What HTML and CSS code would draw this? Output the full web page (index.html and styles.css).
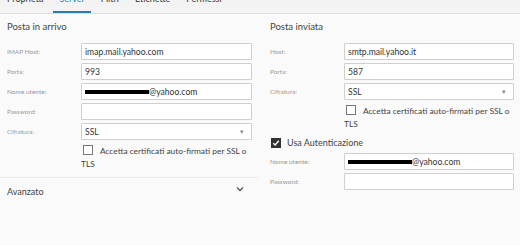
FILE: index.html
```html
<!DOCTYPE html>
<html lang="it">
  <head>
    <meta charset="UTF-8" />
    <title>Impostazioni account</title>
    <link rel="stylesheet" href="styles.css">
  </head>
  <body>
    <nav class="tabs">
      <span class="tab">Proprietà</span>
      <span class="tab active">Server</span>
      <span class="tab">Filtri</span>
      <span class="tab">Etichette</span>
      <span class="tab">Permessi</span>
    </nav>

    <div class="columns">
      <section class="col">
        <h2 class="title">Posta in arrivo</h2>
        <div class="field">
          <label>IMAP Host:</label>
          <div class="input">imap.mail.yahoo.com</div>
        </div>
        <div class="field">
          <label>Porta:</label>
          <div class="input">993</div>
        </div>
        <div class="field">
          <label>Nome utente:</label>
          <div class="input"><span class="redacted"></span>@yahoo.com</div>
        </div>
        <div class="field">
          <label>Password:</label>
          <div class="input"></div>
        </div>
        <div class="field">
          <label>Cifratura:</label>
          <div class="input select">SSL<span class="caret">&#9662;</span></div>
        </div>
        <div class="check-row">
          <div class="check">
            <span class="box"></span>
            <span>Accetta certificati auto-firmati per SSL o TLS</span>
          </div>
        </div>
        <div class="accordion">
          <span>Avanzato</span>
          <svg class="chevron" width="8" height="6" viewBox="0 0 8 6">
            <path d="M1 1.5 L4 4.5 L7 1.5" fill="none" stroke="#555" stroke-width="1.3" />
          </svg>
        </div>
      </section>

      <section class="col">
        <h2 class="title">Posta inviata</h2>
        <div class="field">
          <label>Host:</label>
          <div class="input">smtp.mail.yahoo.it</div>
        </div>
        <div class="field">
          <label>Porta:</label>
          <div class="input">587</div>
        </div>
        <div class="field">
          <label>Cifratura:</label>
          <div class="input select">SSL<span class="caret">&#9662;</span></div>
        </div>
        <div class="check-row">
          <div class="check">
            <span class="box"></span>
            <span>Accetta certificati auto-firmati per SSL o TLS</span>
          </div>
        </div>
        <div class="auth">
          <span class="box checked">
            <svg width="8" height="8" viewBox="0 0 8 8">
              <path d="M1.3 4.2 L3.2 6 L6.8 1.8" fill="none" stroke="#fff" stroke-width="1.5" />
            </svg>
          </span>
          <span>Usa Autenticazione</span>
        </div>
        <div class="field">
          <label>Nome utente:</label>
          <div class="input"><span class="redacted"></span>@yahoo.com</div>
        </div>
        <div class="field">
          <label>Password:</label>
          <div class="input"></div>
        </div>
      </section>
    </div>
  </body>
</html>
```

FILE: styles.css
```css
* {
  box-sizing: border-box;
}

body {
  margin: 0;
  height: 245px;
  overflow: hidden;
  background: #fafafa;
  font-family: Lato, "Noto Sans", sans-serif;
  color: #444;
}

.tabs {
  display: flex;
  height: 14px;
  padding-left: 1px;
  overflow: hidden;
  background: #f3f3f3;
  border-bottom: 1px solid #e0e0e0;
}

.tab {
  margin-top: -6px;
  padding: 0 6px;
  height: 19px;
  font-size: 9px;
  line-height: 10px;
  color: #333;
  margin-right: 4px;
}

.tab.active {
  color: #2b7cab;
  border-bottom: 2px solid #2b7cab;
}

.columns {
  display: grid;
  grid-template-columns: 258px 1fr;
  column-gap: 5px;
}

.col {
  padding: 0 6px 0 7px;
}

.title {
  margin: 0;
  padding: 7px 0 10px;
  font-size: 9.5px;
  line-height: 12px;
  font-weight: normal;
  color: #444;
}

.field {
  display: flex;
  align-items: center;
  margin-bottom: 3px;
}

.field label {
  width: 74px;
  flex: none;
  font-size: 6.5px;
  color: #999;
}

.input {
  flex: 1;
  height: 17px;
  display: flex;
  align-items: center;
  padding: 0 3px;
  background: #fff;
  border: 1px solid #cfcfcf;
  border-radius: 1px;
  font-size: 8.6px;
  color: #333;
}

.select {
  justify-content: space-between;
}

.caret {
  font-size: 7px;
  color: #888;
  margin-right: 4px;
}

.redacted {
  display: inline-block;
  width: 64px;
  height: 4px;
  background: #000;
}

.check-row {
  padding: 2px 0 0 74px;
}

.check {
  font-size: 8.4px;
  line-height: 13px;
  color: #444;
}

.box {
  display: inline-block;
  width: 10px;
  height: 10px;
  margin: 0 5px 0 2px;
  vertical-align: -1px;
  border: 1px solid #777;
  background: #fff;
}

.box.checked {
  display: inline-flex;
  align-items: center;
  justify-content: center;
  margin: 0 6px 0 1px;
  background: #333;
  border-color: #333;
}

.accordion {
  display: flex;
  justify-content: space-between;
  align-items: center;
  margin: 6px -6px 0 -7px;
  padding: 8px 14px 0 7px;
  border-top: 1px solid #ececec;
  font-size: 9px;
  color: #444;
}

.chevron {
  margin-top: -6px;
}

.auth {
  display: flex;
  align-items: center;
  margin: 6px 0 5px;
  font-size: 9px;
  color: #444;
}
```
